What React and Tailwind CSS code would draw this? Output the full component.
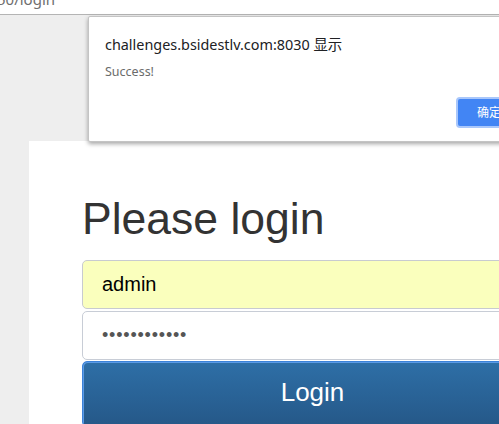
import React from "react";

export default function App() {
  return (
    <div className="relative h-[424px] w-full overflow-hidden bg-[#eeeeee] font-['Liberation_Sans',Arial,sans-serif]">
      {/* address bar, scrolled mostly out of view */}
      <div className="h-[15px] overflow-hidden border-b border-[#b4b4b4] bg-white">
        <div className="-mt-[8px] -ml-[3px] text-[15px] leading-none text-[#6e6e6e] font-['Noto_Sans',sans-serif]">
          50/login
        </div>
      </div>

      {/* page body */}
      <div className="pl-[29px] pt-[126px]">
        <div className="h-[300px] w-[600px] bg-white pl-[53px] pt-[56px]">
          <h2 className="text-[44.5px] leading-none text-[#333333]">Please login</h2>
          <form className="mt-[18px] flex w-[461px] flex-col">
            <input
              readOnly
              value="admin"
              className="h-[49px] rounded-[5px] border border-[#c8cbd0] bg-[#faffbd] px-[19px] text-[20px] text-black outline-none"
            />
            <input
              readOnly
              type="password"
              value="xxxxxxxxxxxx"
              className="mt-[2px] h-[49px] rounded-[5px] border border-[#c8cdd6] bg-white px-[19px] text-[18px] tracking-[0.8px] text-[#555555] outline-none"
            />
            <button
              type="button"
              className="mt-[1px] h-[66px] rounded-[5px] border border-[#3c82d8] bg-gradient-to-b from-[#2e6fa7] to-[#255888] pb-[2px] text-[26px] text-white shadow-[inset_1px_1px_0_#5b9be6]"
            >
              Login
            </button>
          </form>
        </div>
      </div>

      {/* alert dialog */}
      <div className="absolute left-[88px] top-[16px] h-[126px] w-[460px] rounded-[2px] border border-[#c4c4c4] bg-white pl-[16px] pt-[18px] shadow-[0_2px_4px_rgba(0,0,0,0.35)] font-['Noto_Sans','Noto_Sans_CJK_SC',sans-serif]">
        <div className="text-[14.4px] leading-[20px] text-[#202124]">
          challenges.bsidestlv.com:8030 显示
        </div>
        <div className="mt-[9px] text-[12.5px] leading-[16px] text-[#6b6b6b]">Success!</div>
        <div className="absolute left-[367px] top-[80px] flex h-[31px] w-[70px] items-center rounded-[4px] border-2 border-[#a9c7fb] bg-[#4285f4] pl-[19px] text-[12px] text-white">
          确定
        </div>
      </div>
    </div>
  );
}
